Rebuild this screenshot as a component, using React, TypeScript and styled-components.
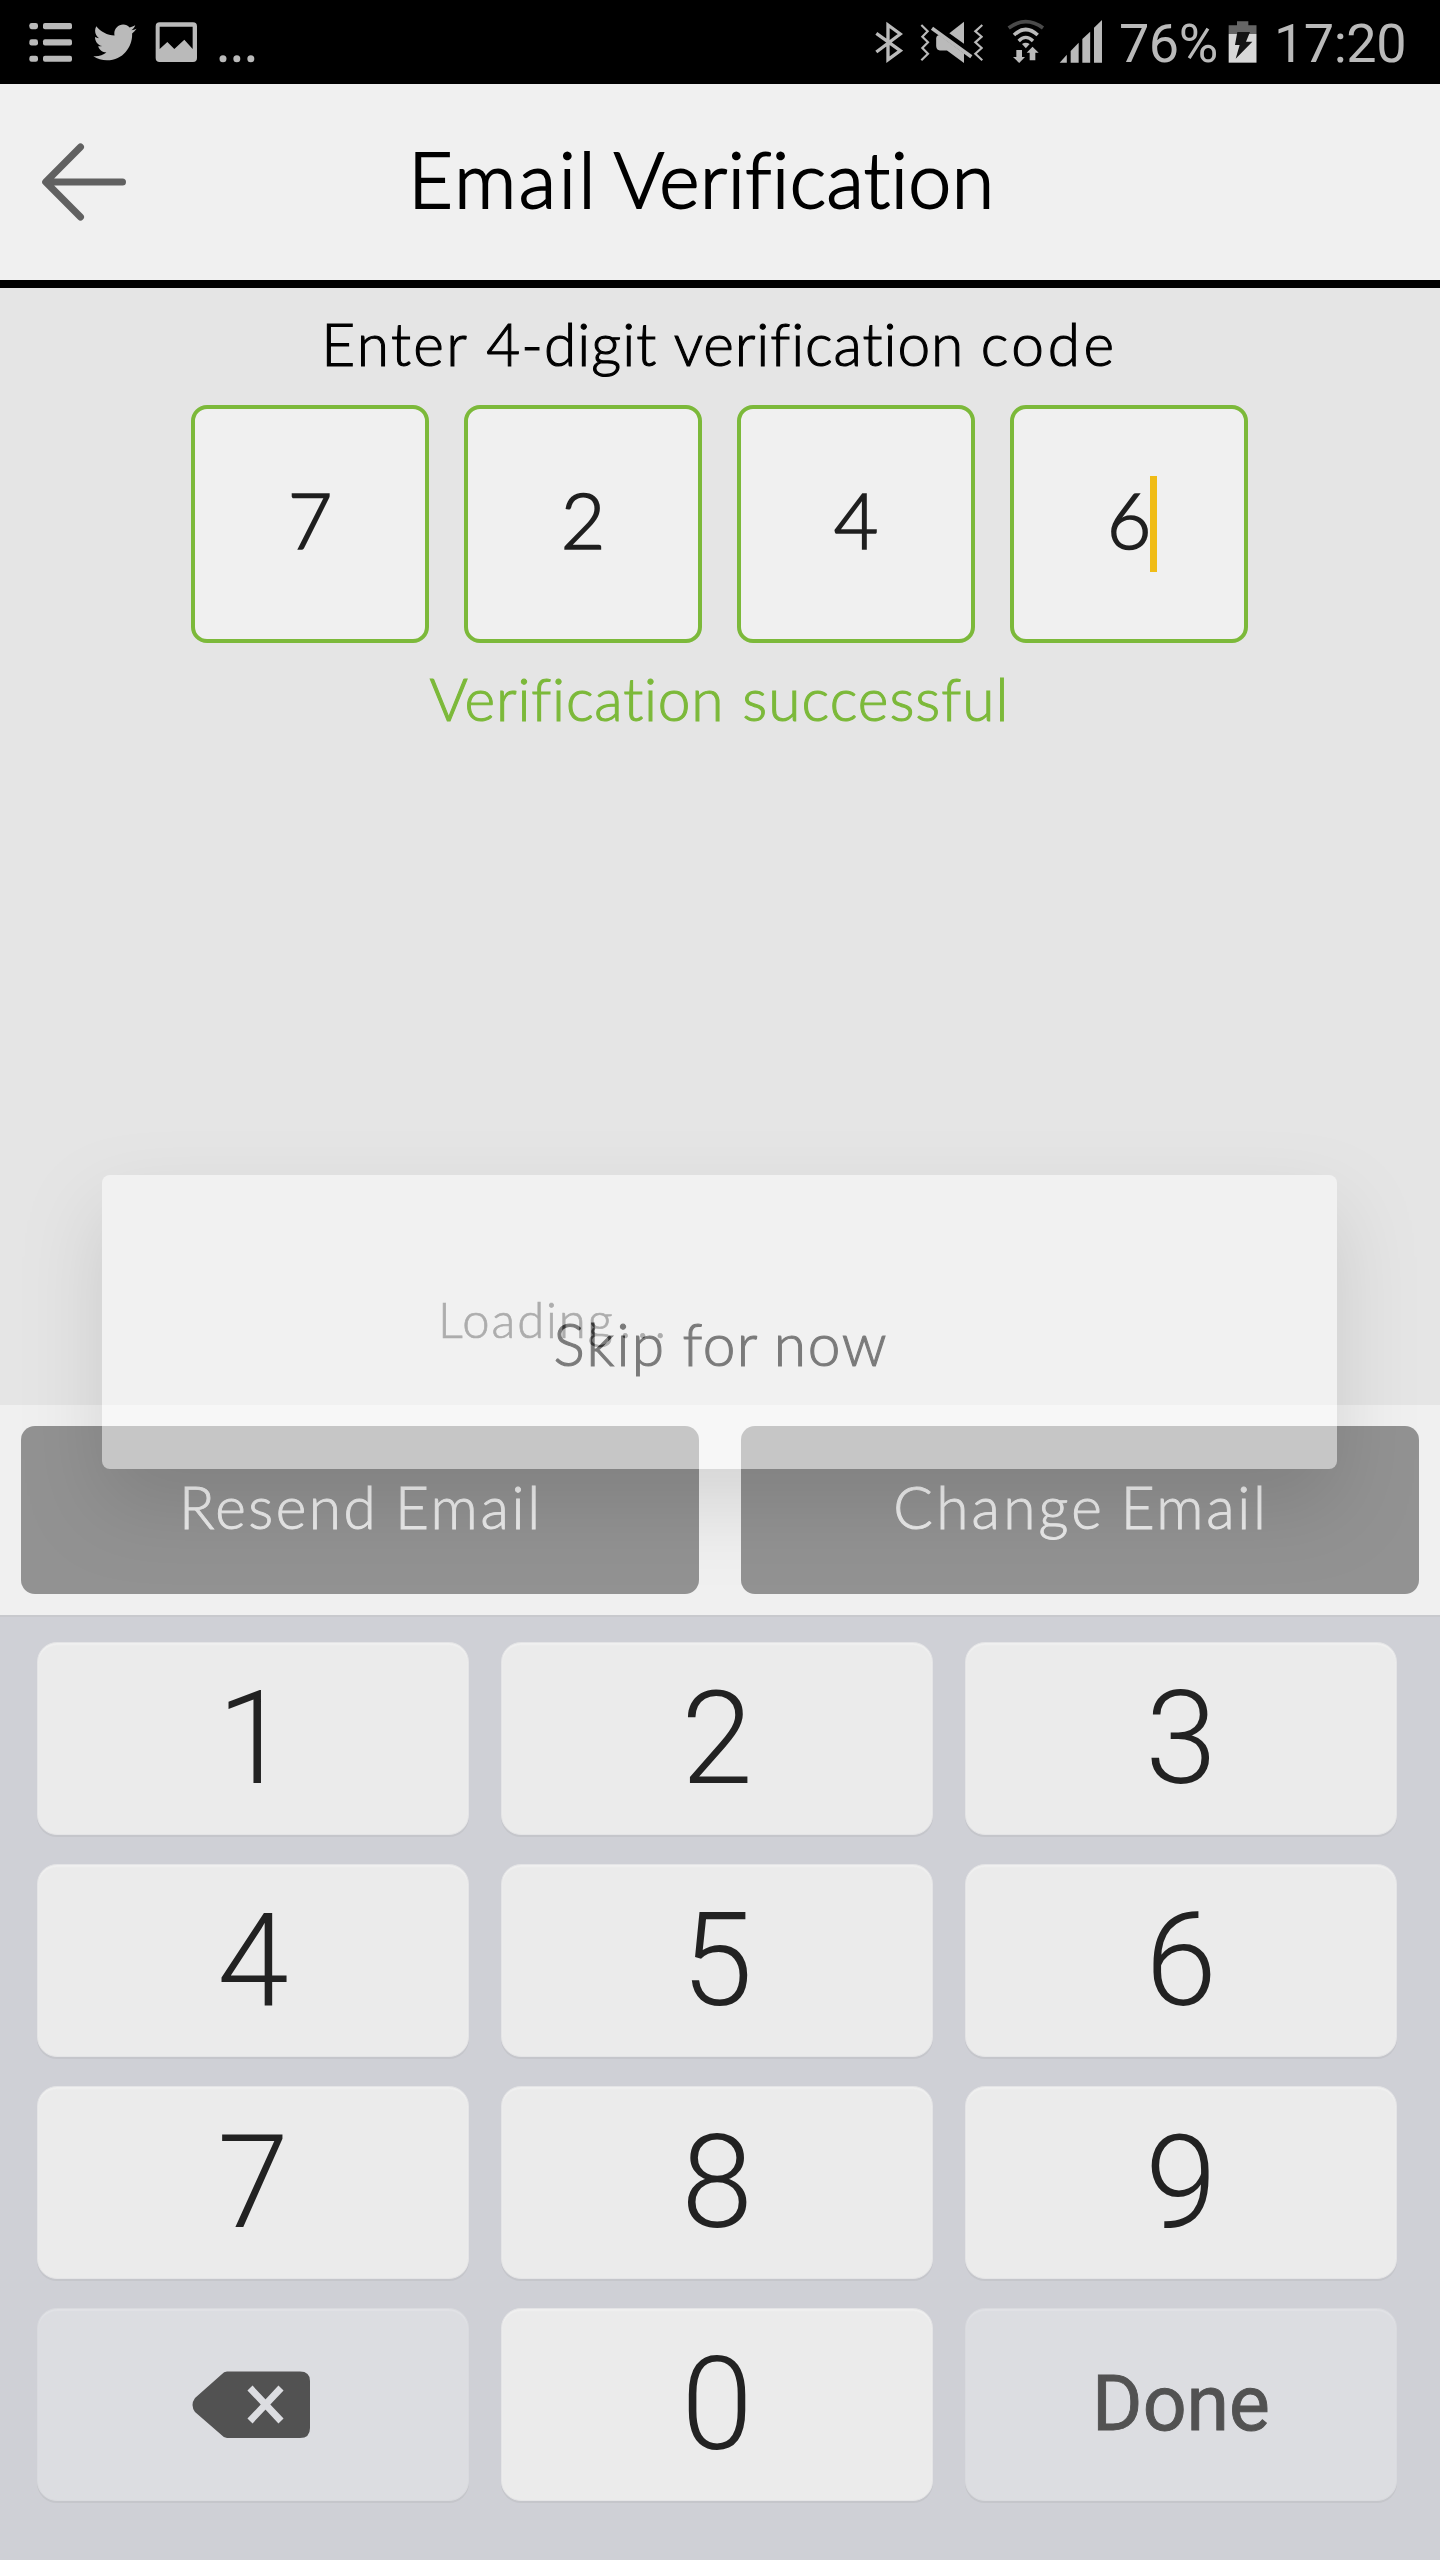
import React from "react";
import styled, { createGlobalStyle } from "styled-components";

const GlobalStyle = createGlobalStyle`
  * { box-sizing: border-box; }
  body { margin: 0; background: #e5e5e5; }
`;

const appFont = `Lato, "Open Sans", sans-serif`;
const systemFont = `Roboto, "Noto Sans", sans-serif`;

const Screen = styled.div`
  position: relative;
  display: flex;
  flex-direction: column;
  width: 1440px;
  height: 2560px;
  overflow: hidden;
  background: #e5e5e5;
  font-family: ${appFont};
  font-weight: 300;
  font-variant-ligatures: none;
  white-space: nowrap;
`;

const StatusBar = styled.div`
  display: flex;
  justify-content: space-between;
  align-items: flex-start;
  height: 84px;
  padding: 10px 34px 0 29px;
  background: #000;
`;

const StatusGroup = styled.div`
  display: flex;
  align-items: flex-start;
`;

const Glyph = styled.svg<{ $gap?: number }>`
  display: block;
  flex: none;
  margin-left: ${(p) => p.$gap ?? 0}px;
`;

const StatusText = styled.span<{ $gap: number }>`
  margin-left: ${(p) => p.$gap}px;
  font-family: ${systemFont};
  font-weight: 400;
  font-size: 54px;
  line-height: 68px;
  letter-spacing: -0.5px;
  color: #bababa;
`;

/* One word of a label, with its own tracking and the space before it. */
const Word = styled.span<{ $track: number; $before?: number }>`
  margin-left: ${(p) => p.$before ?? 0}px;
  letter-spacing: ${(p) => p.$track}px;
`;

const Header = styled.header`
  display: flex;
  align-items: center;
  height: 204px;
  padding: 0 163px 0 42px;
  background: #f0f0f0;
  border-bottom: 8px solid #000;
`;

const Title = styled.h1`
  flex: 1;
  margin: 0;
  padding-bottom: 9px;
  text-align: center;
  font-weight: 300;
  font-size: 77px;
  line-height: 92px;
  color: #000;
  -webkit-text-stroke: 1.9px #000;
`;

const Content = styled.main`
  flex: 1;
  display: flex;
  flex-direction: column;
  align-items: center;
  padding: 15px 1px 22px 0;
`;

const Line = styled.p<{ $color: string }>`
  margin: 0;
  font-size: 58.6px;
  line-height: 80px;
  color: ${(p) => p.$color};
  -webkit-text-stroke: 1.1px ${(p) => p.$color};
`;

const CodeRow = styled.div`
  display: flex;
  gap: 35px;
  margin: 22px 0 15px;
`;

const CodeBox = styled.div`
  position: relative;
  display: flex;
  align-items: center;
  justify-content: center;
  width: 238px;
  height: 238px;
  padding-bottom: 10px;
  border: 4px solid #7cb93a;
  border-radius: 16px;
  background: #f0f0f0;
  font-size: 77px;
  line-height: 92px;
  color: #1f1f1f;
  -webkit-text-stroke: 1.7px #1f1f1f;
`;

const Caret = styled.i`
  position: absolute;
  left: 136px;
  top: 67px;
  width: 7px;
  height: 96px;
  background: #f0bc16;
`;

const SkipSlot = styled.div`
  margin: auto 0 0 3px;
`;

const Actions = styled.div`
  display: flex;
  gap: 42px;
  height: 210px;
  padding: 21px;
  background: #f0f0f0;
`;

const ActionButton = styled.button`
  flex: 1;
  padding: 0 0 8px 2px;
  border: 0;
  border-radius: 14px;
  background: #929292;
  font-family: inherit;
  font-weight: 300;
  font-size: 58.6px;
  color: #eaeaea;
  -webkit-text-stroke: 0.9px #eaeaea;
`;

const LoadingDialog = styled.div`
  position: absolute;
  left: 102px;
  top: 1175px;
  width: 1235px;
  height: 294px;
  padding: 114px 0 0 336px;
  border-radius: 8px;
  background: #fff;
  box-shadow: 0 36px 80px rgba(0, 0, 0, 0.24);
  opacity: 0.48;
  font-size: 49px;
  line-height: 60px;
  color: #717171;
  -webkit-text-stroke: 0.7px #717171;
`;

const Keyboard = styled.div`
  display: grid;
  grid-template-columns: repeat(3, 432px);
  grid-auto-rows: 193px;
  gap: 29px 32px;
  height: 945px;
  padding: 25px 37px;
  border-top: 2px solid #c8c9cd;
  background: #cfd0d6;
`;

const Key = styled.button<{ $special?: boolean }>`
  display: flex;
  align-items: center;
  justify-content: center;
  padding: 0;
  border: 1px solid ${(p) => (p.$special ? "#d9dade" : "#e4e4e6")};
  border-radius: 20px;
  background: ${(p) => (p.$special ? "#dcdde1" : "#ebebeb")};
  box-shadow:
    0 2px 0 #c5c6cb,
    inset 0 2px 1px ${(p) => (p.$special ? "#e1e2e6" : "#f0f0f0")};
  font-family: ${systemFont};
  font-weight: ${(p) => (p.$special ? 400 : 300)};
  font-size: ${(p) => (p.$special ? 77 : 129)}px;
  line-height: 1;
  color: ${(p) => (p.$special ? "#525252" : "#222")};
  -webkit-text-stroke: ${(p) => (p.$special ? "0.9px #525252" : "0")};
`;

const EraseGlyph = styled.svg`
  display: block;
  margin-right: 4px;
`;

const grey = "#bababa";

function ListIcon() {
  return (
    <Glyph width="43.67" height="66" viewBox="87 30 131 198" fill={grey}>
      {[69, 118, 167].map((y) => (
        <g key={y}>
          <rect x="88" y={y} width="26" height="18.5" rx="7" />
          <rect x="129" y={y} width="87" height="18.5" rx="6" />
        </g>
      ))}
    </Glyph>
  );
}

function BirdIcon() {
  return (
    <Glyph $gap={20.3} width="44" height="66" viewBox="279 30 132 198" fill={grey}>
      <path
        transform="translate(280 61.3) scale(5.4 5.49)"
        d="M23.954 4.569c-.885.389-1.83.654-2.825.775 1.014-.611 1.794-1.574 2.163-2.723-.951.555-2.005.959-3.127 1.184-.896-.959-2.173-1.559-3.591-1.559-2.717 0-4.92 2.203-4.92 4.917 0 .39.045.765.127 1.124C7.691 8.094 4.066 6.13 1.64 3.161c-.427.722-.666 1.561-.666 2.475 0 1.71.87 3.213 2.188 4.096-.807-.026-1.566-.248-2.228-.616v.061c0 2.385 1.693 4.374 3.946 4.827-.413.111-.849.171-1.296.171-.314 0-.615-.03-.916-.086.631 1.953 2.445 3.377 4.604 3.417-1.68 1.319-3.809 2.105-6.102 2.105-.39 0-.779-.023-1.17-.067 2.189 1.394 4.768 2.209 7.557 2.209 9.054 0 13.999-7.496 13.999-13.986 0-.209 0-.42-.015-.63.961-.689 1.8-1.56 2.46-2.548l-.047-.02z"
      />
    </Glyph>
  );
}

function PictureIcon() {
  return (
    <Glyph $gap={18.3} width="42.67" height="66" viewBox="466 30 128 198" fill={grey}>
      <path
        fillRule="evenodd"
        d="M480 67H580Q592 67 592 79V174Q592 186 580 186H480Q468 186 468 174V79Q468 67 480 67ZM480 80V147L503 126L524 147L554 119L579 147V80Z"
      />
    </Glyph>
  );
}

function MoreIcon() {
  return (
    <Glyph $gap={21.3} width="36.67" height="66" viewBox="658 30 110 198" fill={grey}>
      <circle cx="670" cy="176" r="10.5" />
      <circle cx="711.5" cy="176" r="10.5" />
      <circle cx="753.5" cy="176" r="10.5" />
    </Glyph>
  );
}

function BluetoothIcon() {
  return (
    <Glyph width="28.67" height="66" viewBox="24 0 86 198" fill="none" stroke={grey} strokeWidth="10">
      <path d="M28 70L100 122L63 149V45L100 72L28 126" />
    </Glyph>
  );
}

function MuteIcon() {
  return (
    <Glyph $gap={15.3} width="64.67" height="66" viewBox="156 0 194 198" fill={grey}>
      <g fill="none" stroke={grey} strokeWidth="6.5">
        <path d="M163 45L182 64L166 80L183 97L166 114L183 131L163 151" />
        <path d="M346 45L325 64L344 80L325 97L344 114L325 131L346 151" />
        <path d="M195 55L313 140" strokeWidth="11" />
      </g>
      <path d="M247 70L291 35V101Z" />
      <path d="M216 75L291 130V159L240 121.5H219Q208 120 207.5 108V84Q208 77 216 75Z" />
    </Glyph>
  );
}

function WifiIcon() {
  return (
    <Glyph $gap={24} width="38" height="66" viewBox="422 0 114 198" fill={grey}>
      <g fill="none" strokeWidth="11">
        <path d="M427 54Q478 16 530 54" stroke="#4a4a4a" />
        <path d="M443 75Q478 42 514 75" stroke={grey} />
        <path d="M457 93Q478 71 500 93" stroke={grey} strokeWidth="10" />
      </g>
      <path d="M467 102Q478 94 490 102L478.500 115Z" />
      <path d="M450 120H467V141H476L458.500 159L440 141H450Z" />
      <path d="M490 151H507V128H517L498.500 110L481 128H490Z" />
    </Glyph>
  );
}

function SignalIcon() {
  return (
    <Glyph $gap={13.3} width="43.33" height="66" viewBox="576 0 130 198" fill={grey}>
      <path d="M578 158L599.500 134V158Z" />
      <path d="M611 158V123L635 98V158Z" />
      <path d="M646 158V87L669.500 65V158Z" />
      <path d="M681 158V53L705 30V158Z" />
    </Glyph>
  );
}

function BatteryIcon() {
  return (
    <Glyph $gap={10} width="29.33" height="66" viewBox="52 0 88 198">
      <path d="M54 72V46H79V34H113V46H137.500V72Z" fill="#656565" />
      <path d="M54 72H137.500V158H54Z" fill="#d8d8d8" />
      <path d="M80 66H118L106 95H125L75 146L87 105H73Z" fill="#141414" />
    </Glyph>
  );
}

function BackArrow() {
  return (
    <svg width="84" height="78" viewBox="0 0 84 78" fill="none" stroke="#616161" strokeWidth="7" strokeLinecap="round" strokeLinejoin="round">
      <path d="M38.500 4L3.700 39L38.500 74M4 39H80.500" />
    </svg>
  );
}

function BackspaceIcon() {
  return (
    <EraseGlyph width="118" height="68" viewBox="0 0 118 68">
      <path
        d="M35 0.500H108Q118 0.500 118 10V57Q118 67 108 67H35Q32 67 29.500 64L3 41Q-2 34 3 27L29.500 3.500Q32 0.500 35 0.500Z"
        fill="#525252"
      />
      <path d="M58 17L89 50M89 17L58 50" stroke="#dcdde1" strokeWidth="7" fill="none" />
    </EraseGlyph>
  );
}

export default function App() {
  return (
    <Screen>
      <GlobalStyle />
      <StatusBar>
        <StatusGroup>
          <ListIcon />
          <BirdIcon />
          <PictureIcon />
          <MoreIcon />
        </StatusGroup>
        <StatusGroup>
          <BluetoothIcon />
          <MuteIcon />
          <WifiIcon />
          <SignalIcon />
          <StatusText $gap={17}>76%</StatusText>
          <BatteryIcon />
          <StatusText $gap={17}>17:20</StatusText>
        </StatusGroup>
      </StatusBar>
      <Header>
        <BackArrow />
        <Title>
          <Word $track={2.6}>Email</Word>
          <Word $track={0.5} $before={-3}> Verification</Word>
        </Title>
      </Header>
      <Content>
        <Line $color="#000">
          <Word $track={2.4}>Enter</Word>
          <Word $track={1}> 4-digit</Word>
          <Word $track={0.9} $before={1}> verification</Word>
          <Word $track={3.6} $before={-3}> code</Word>
        </Line>
        <CodeRow>
          <CodeBox>7</CodeBox>
          <CodeBox>2</CodeBox>
          <CodeBox>4</CodeBox>
          <CodeBox>
            6<Caret />
          </CodeBox>
        </CodeRow>
        <Line $color="#7cb93a">
          <Word $track={0.8}>Verification</Word>
          <Word $track={1.05} $before={1}> successful</Word>
        </Line>
        <SkipSlot>
          <Line $color="#000">
            <Word $track={2.2}>Skip</Word>
            <Word $track={1.4} $before={-1}> for</Word>
            <Word $track={1.8} $before={-3}> now</Word>
          </Line>
        </SkipSlot>
      </Content>
      <Actions>
        <ActionButton>
          <Word $track={2.5}>Resend</Word>
          <Word $track={2.7} $before={-2}> Email</Word>
        </ActionButton>
        <ActionButton>
          <Word $track={3.2}>Change</Word>
          <Word $track={2.7} $before={-3}> Email</Word>
        </ActionButton>
      </Actions>
      <Keyboard>
        {["1", "2", "3", "4", "5", "6", "7", "8", "9"].map((n) => (
          <Key key={n}>{n}</Key>
        ))}
        <Key $special aria-label="Backspace">
          <BackspaceIcon />
        </Key>
        <Key>0</Key>
        <Key $special>Done</Key>
      </Keyboard>
      <LoadingDialog>
        <Word $track={1.9}>Loading</Word>
        <Word $track={6} $before={4.9}>...</Word>
      </LoadingDialog>
    </Screen>
  );
}
